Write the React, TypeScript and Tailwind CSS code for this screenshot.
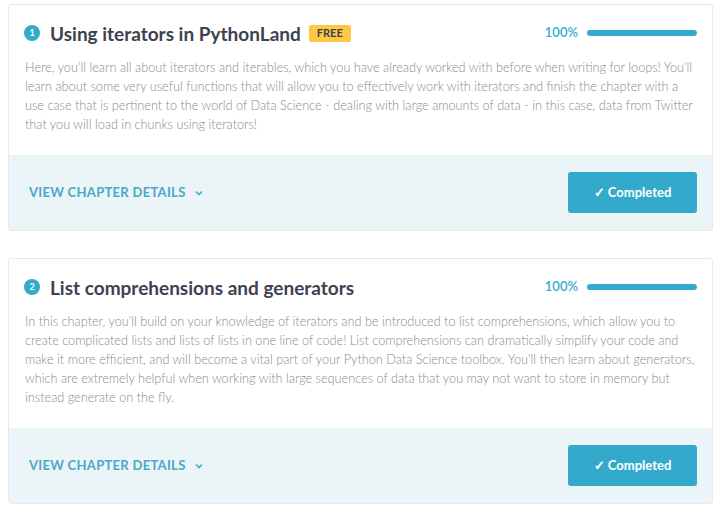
import React from 'react'

type Chapter = {
  num: number
  title: string
  free?: boolean
  text: string
}

const chapters: Chapter[] = [
  {
    num: 1,
    title: 'Using iterators in PythonLand',
    free: true,
    text: "Here, you'll learn all about iterators and iterables, which you have already worked with before when writing for loops! You'll learn about some very useful functions that will allow you to effectively work with iterators and finish the chapter with a use case that is pertinent to the world of Data Science - dealing with large amounts of data - in this case, data from Twitter that you will load in chunks using iterators!",
  },
  {
    num: 2,
    title: 'List comprehensions and generators',
    text: "In this chapter, you'll build on your knowledge of iterators and be introduced to list comprehensions, which allow you to create complicated lists and lists of lists in one line of code! List comprehensions can dramatically simplify your code and make it more efficient, and will become a vital part of your Python Data Science toolbox. You'll then learn about generators, which are extremely helpful when working with large sequences of data that you may not want to store in memory but instead generate on the fly.",
  },
]

const ChapterCard = ({ chapter }: { chapter: Chapter }) => {
  return (
    <div className="w-[705px] rounded-[3px] border border-[#e6eaeb] bg-white">
      <div className="px-[15px] pt-[15px] pb-[21px]">
        <div className="flex h-[26px] items-center justify-between">
          <div className="flex items-center">
            <span className="flex h-[16px] w-[16px] items-center justify-center rounded-full bg-[#33aacc] text-[9px] font-bold text-white">
              {chapter.num}
            </span>
            <h3 className="ml-[10px] text-[19px] font-bold leading-none text-[#3d4251]">{chapter.title}</h3>
            {chapter.free && (
              <span className="ml-[8px] flex h-[17px] items-center rounded-[2px] bg-[#ffc844] px-[8px] text-[11px] font-bold text-[#3d4251]">
                FREE
              </span>
            )}
          </div>
          <div className="flex items-center">
            <span className="text-[13px] font-semibold text-[#33aacc]">100%</span>
            <div className="ml-[9px] h-[6px] w-[110px] rounded-full bg-[#33aacc]" />
          </div>
        </div>
        <p className="mt-[12px] mr-[-2px] pl-[1px] text-[12.7px] font-light leading-[19px] text-[#878b93]">
          {chapter.text}
        </p>
      </div>
      <div className="flex h-[75px] items-center justify-between bg-[#ebf4f7] pr-[15px] pl-[20px]">
        <button className="flex items-center text-[13px] font-bold tracking-[0.3px] text-[#4aa8c8]">
          VIEW CHAPTER DETAILS
          <svg className="ml-[9px]" width="8" height="6" viewBox="0 0 8 6" fill="none">
            <path d="M1 1.5 L4 4.5 L7 1.5" stroke="#4aa8c8" strokeWidth="1.6" />
          </svg>
        </button>
        <button className="flex h-[41px] w-[129px] items-center justify-center rounded-[3px] bg-[#33aacc] text-[13px] font-bold text-white">
          ✓ Completed
        </button>
      </div>
    </div>
  )
}

export default function App() {
  return (
    <div className="min-h-[513px] bg-white pt-[4px] pl-[8px] font-['Lato','Liberation_Sans',sans-serif]">
      <div className="flex flex-col gap-[27px]">
        {chapters.map((c) => (
          <ChapterCard key={c.num} chapter={c} />
        ))}
      </div>
    </div>
  )
}
